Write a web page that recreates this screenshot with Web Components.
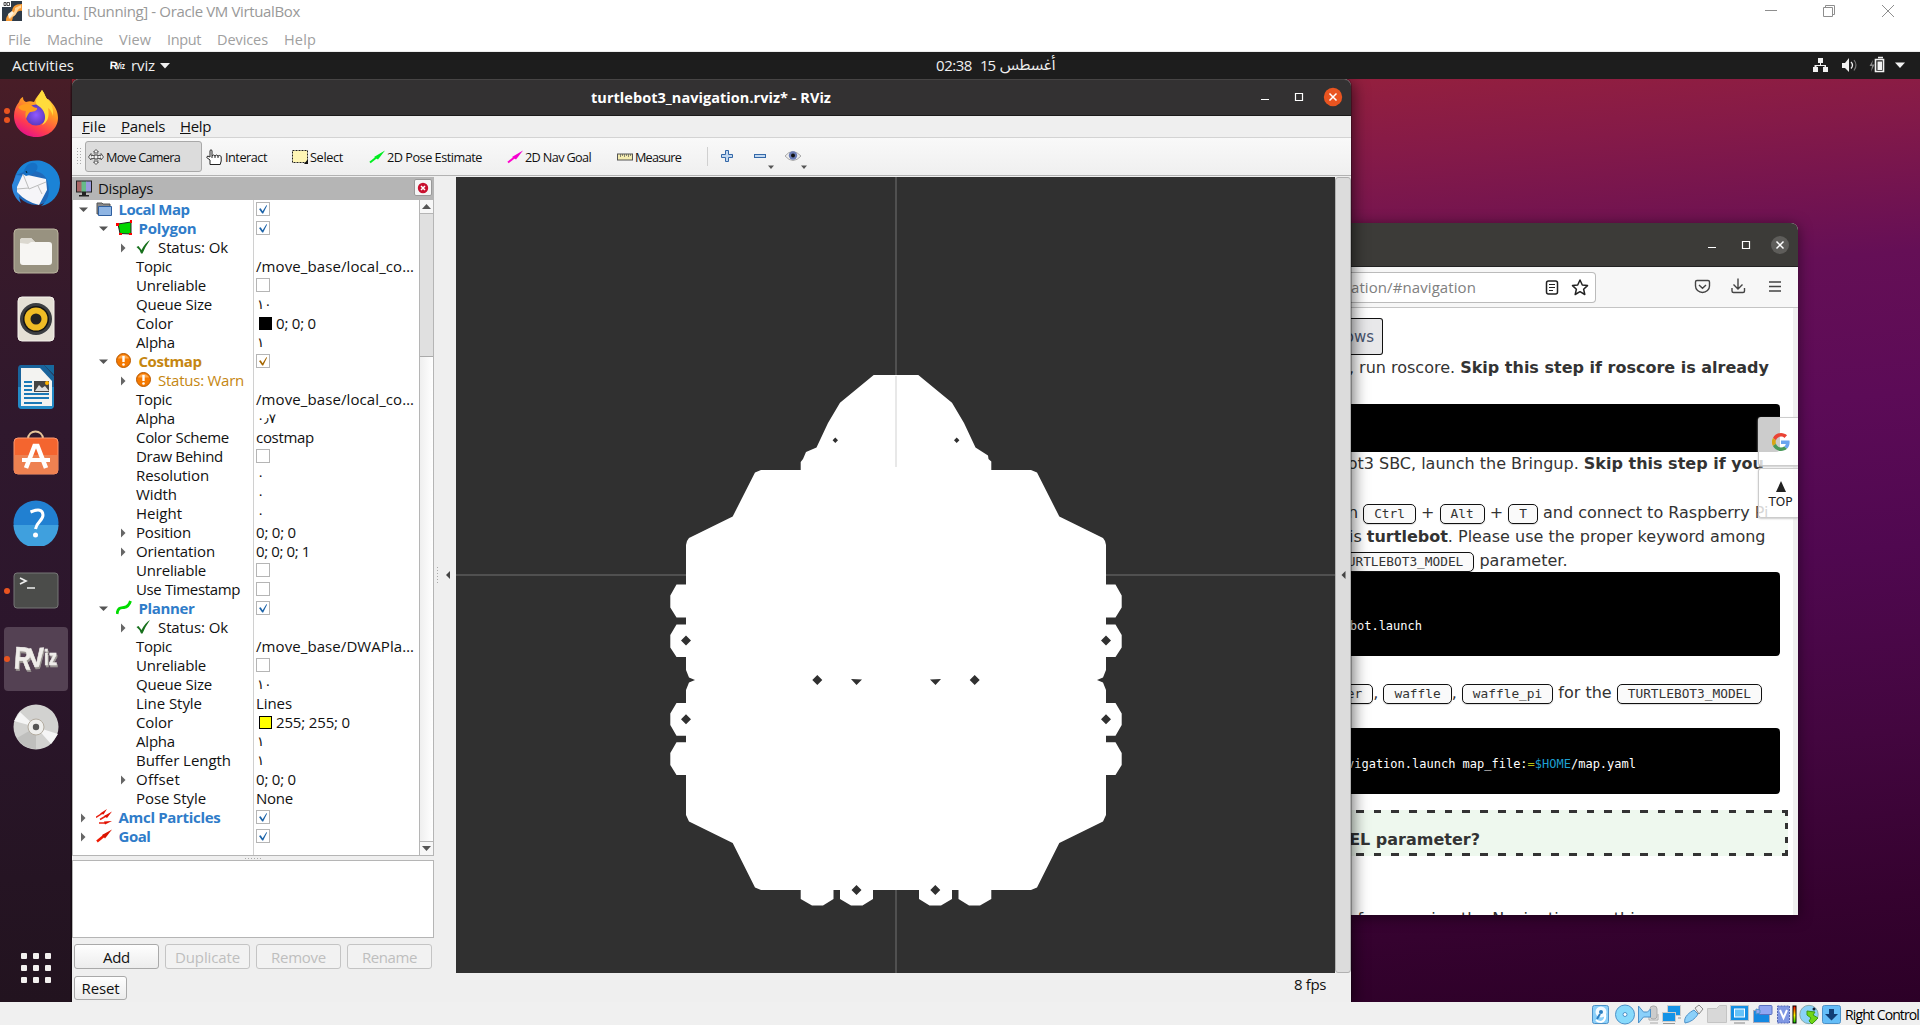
<!DOCTYPE html>
<html lang="en">
<head>
<meta charset="utf-8">
<title>ubuntu. [Running] - Oracle VM VirtualBox</title>
<style>
html,body{margin:0;padding:0;width:1920px;height:1025px;overflow:hidden;background:#fff}
</style>
</head>
<body>
<vm-host></vm-host>
<script>
const UI='"Open Sans","Noto Sans",sans-serif';
function el(name,html,init){
  customElements.define(name,class extends HTMLElement{
    constructor(){super();this.attachShadow({mode:'open'})}
    connectedCallback(){
      if(this.ready)return;this.ready=true;
      this.shadowRoot.innerHTML=typeof html==='function'?html(this):html;
      if(init)init(this);
    }
  });
}
/* Text that is tracked to fill a given width */
el('fit-text','<style>:host{display:inline-block;white-space:pre}</style><slot></slot>',h=>{
  const w=+h.getAttribute('w');
  h.style.letterSpacing='0px';
  const n=[...h.textContent].length;
  h.style.letterSpacing=((w-h.getBoundingClientRect().width)/n).toFixed(3)+'px';
  h.style.width=w+'px';
});

el('host-titlebar',`<style>
:host{display:flex;flex-direction:column;height:51px;background:#fff;border-bottom:1px solid #ececec;color:#999;font:15px ${UI};box-sizing:content-box}
.row{display:flex;height:25px;align-items:flex-start}
.row fit-text{margin:1px 0 0 5px;line-height:20px}
.menu{display:flex;height:26px;padding-left:8px;gap:16px;line-height:29px;color:#a0a0a0;font-size:14.5px}
svg{display:block}.ctl{margin-left:auto;padding-right:24px}
</style>
<div class="row"><svg width="20" height="20" style="margin:1px 0 0 2px"><rect width="20" height="20" fill="#2e3a47"/><path d="M4 20C4 12 9 14 10 10S12 3 20 3V10C14 9 15 14 11 16L10 20Z" fill="#f79a35"/><path d="M8 18C8 12 13 14 13 7L19 4V7C14 8 16 14 10 16Z" fill="#ffd59a"/><path d="M6 13L10 10L12 12L7 18Z" fill="#fff3dc"/><rect x="0" y="0" width="9" height="6" fill="#fff"/><path d="M2 1.500H4V4.500H2ZM5 1.500H7.500V4.500H5Z" fill="none" stroke="#222" stroke-width=".8"/></svg>
<fit-text w="273">ubuntu. [Running] - Oracle VM VirtualBox</fit-text>
<svg class="ctl" width="132" height="24" fill="none" stroke="#8e8e8e"><path d="M1 10.500H13M61.500 7.500V5.500H70.500V14.500H68.500M59.500 7.500H68.500V16.500H59.500ZM118 5L130 17M130 5L118 17"/></svg></div>
<div class="menu"><fit-text w="23">File</fit-text><fit-text w="56">Machine</fit-text><fit-text w="32">View</fit-text><fit-text w="34">Input</fit-text><fit-text w="51">Devices</fit-text><fit-text w="32">Help</fit-text></div>`);

el('gnome-bar',`<style>
:host{display:grid;grid-template-columns:936px 1fr auto;height:27px;background:#1d1d1d;color:#f0f0f0;font:15px/27px ${UI};align-items:center}
.l,.c{display:flex;align-items:center;height:27px}svg{display:block}
.ar{font-family:"Noto Sans Arabic","DejaVu Sans",sans-serif;font-size:15.500px}
.rv{margin-left:36px;width:21px}
</style>
<div class="l"><fit-text w="62" style="margin-left:12px">Activities</fit-text><svg class="rv" width="21" height="14" fill="#fff" font-family="Liberation Sans" font-weight="bold"><text x="0" y="10" font-size="11" textLength="8" lengthAdjust="spacingAndGlyphs" transform="rotate(3)">R</text><text x="6" y="10" font-size="9.500" textLength="9" lengthAdjust="spacingAndGlyphs">Viz</text></svg><fit-text w="24">rviz</fit-text><svg width="10" height="6" style="margin-left:5px"><path d="M0 0H10L5 5.500Z" fill="#f0f0f0"/></svg></div>
<div class="c"><fit-text w="36">02:38</fit-text><fit-text w="15" style="margin-left:8px">15</fit-text><span class="ar" dir="rtl" style="margin-left:5px">أغسطس</span></div>
<svg width="107" height="27" fill="#f2f2f2"><path d="M5 6h5v5h-2v2h5v2h2v5h-5v-5h1.500v-1H3.500v1H5v5H0v-5h1.500v-2H7v-2H5Z"/><path d="M29 11h3l4-5v14l-4-4h-3Z"/><path d="M38 10q3 3 0 6.500" fill="none" stroke="#eee" stroke-width="1.300"/><path d="M41 8q4 5 0 10.500" fill="none" stroke="#777" stroke-width="1.200"/><path d="M60 8l-3.500 6h2.500l-1 6l3.500-7.500h-2.500Z" fill="#888"/><path d="M65 5.500h5M62.500 7.500h8v12h-8Z" fill="none" stroke="#f2f2f2" stroke-width="1.600"/><rect x="64.500" y="9.500" width="4.500" height="8.500"/><path d="M82 10.500h10l-5 5.500Z"/></svg>`);

el('dock-item',h=>`<style>:host{display:flex;width:72px;height:64px;align-items:center;justify-content:center;position:relative;flex:none}
.tile{display:flex;align-items:center;justify-content:center;width:64px;height:64px;border-radius:4px;${h.hasAttribute('active')?'background:#544153':''}}
.dots{position:absolute;left:4px;top:0;height:64px;display:flex;flex-direction:column;justify-content:center;gap:3px}
i{display:block;width:6px;height:6px;border-radius:3px;background:#e95420}</style>
<span class="tile"><slot></slot></span><span class="dots">${'<i></i>'.repeat(+h.getAttribute('dots')||0)}</span>`);

el('ubuntu-dock',`<style>
:host{display:flex;flex-direction:column;width:72px;height:923px;background:linear-gradient(#481d27 0,#381a2a 150px,#2f182d 350px,#2c162c 550px,#251423 800px,#22131f)}
svg{display:block}.apps{margin:auto 0 19px 21px;display:grid;grid-template-columns:repeat(3,6px);gap:6px}.apps i{width:6px;height:6px;background:#f3f0ef;border-radius:1px}
.list{display:flex;flex-direction:column;gap:4px;padding-top:4px}
</style><div class="list">
<dock-item dots="2"><svg width="46" height="48" viewBox="0 0 46 48" style="margin-top:-2px"><defs><linearGradient id="a" x1=".8" y1="0" x2=".3" y2="1"><stop stop-color="#fff04a"/><stop offset=".4" stop-color="#ff9a24"/><stop offset=".75" stop-color="#ff3d4e"/><stop offset="1" stop-color="#e3108c"/></linearGradient><radialGradient id="b"><stop stop-color="#9059ff"/><stop offset="1" stop-color="#5b3ac0"/></radialGradient></defs><path d="M6 12C7 9 8 8 10 7c0 3 1 4 3 5 3-1 5-1 8 0 2-5 5-7 8-12 3 4 3 6 5 9 2 0 3 2 4 3 5 5 7 11 7 16C45 39 35 47 23 47S1 38 1 26C1 20 3 16 6 12Z" fill="url(#a)"/><circle cx="23" cy="25" r="10.500" fill="url(#b)"/><path d="M5 17c4-3 9-4 13-2 2 2 4 3 6 3 1 3-5 4-7 4-2 2-3 4-4 7-1-4-1-5 0-8-3 0-6-1-8-4Z" fill="#ff9d1e"/><path d="M29 0c3 4 3 7 6 10 6 6 5 13 5 16-1-4-3-7-5-8 2 9-1 15-6 17 7-8 1-17-5-20-3-4 1-8 5-15Z" fill="#ffdc3c"/></svg></dock-item>
<dock-item><svg width="48" height="48" viewBox="0 0 48 48"><circle cx="24" cy="24" r="22" fill="#2069b9"/><path d="M4 16C8 4 18 0 30 2c11 3 18 12 18 22 0 12-8 21-19 23 8-6 9-14 7-22-1-10-11-15-22-13Z" fill="#1b83d6"/><path d="M4 16L0 26c0 8 4 14 9 18-3-6-3-18 4-27Z" fill="#2e86db"/><path d="M5 28L11 15L34 20L35 31L27 46Q14 43 5 33Z" fill="#f6f5f8"/><path d="M11 15l6 15 17-7M5 30l12-1M26 27l4 8" fill="none" stroke="#bbb"/><path d="M11 15C13 4 22 1 25 6c2 4-2 9-11 11Z" fill="#1670c5"/><path d="M14 12l1 2" stroke="#022"/></svg></dock-item>
<dock-item><svg width="46" height="46" viewBox="0 0 46 46"><rect x="1" y="1" width="44" height="44" rx="4" fill="#989280" stroke="#bbb59f"/><path d="M7 13q0-3 3-3h8l4 4h14q3 0 3 3v17q0 3-3 3H10q-3 0-3-3Z" fill="#f7f6f3"/><path d="M7 15v-2q0-3 3-3h8l4 4h-4l-3 2Z" fill="#dbd8cf"/></svg></dock-item>
<dock-item><svg width="38" height="46"><rect x="1" y="1" width="36" height="44" rx="4" fill="#e5e0d5" stroke="#f5f2ec"/><circle cx="19" cy="23" r="16" fill="#3b3d40"/><circle cx="19" cy="23" r="13" fill="#151515"/><circle cx="19" cy="23" r="11.500" fill="#efbc25"/><circle cx="19" cy="23" r="5.500" fill="#222"/></svg></dock-item>
<dock-item><svg width="38" height="46"><path d="M4 1h23l10 11v29q0 4-4 4H5q-4 0-4-4V5q0-4 3-4Z" fill="#19639b"/><path d="M1 23h36v18q0 4-4 4H5q-4 0-4-4Z" fill="#238ac6"/><path d="M27 1h10v10Z" fill="#17699e"/><path d="M4 4h19l12 13v25H4Z" fill="#f3f3f1"/><path d="M7 18h8M7 22h8M7 26h8M7 30h25M7 34h25M7 39h18" stroke="#1b79b7" stroke-width="2"/><rect x="17" y="17" width="15" height="11" fill="#444"/><path d="M18 27l4-6 3 3 3-2 4 5Z" fill="#ddd"/><circle cx="30" cy="19" r="2" fill="#ffb300"/></svg></dock-item>
<dock-item><svg width="46" height="46" style="margin-bottom:5px"><path d="M15 9c0-10 15-10 15 0" fill="none" stroke="#e7c59a" stroke-width="2"/><rect x="1" y="8" width="44" height="36" rx="4" fill="#f4652f" stroke="#ff9970"/><path d="M1 25h44v15q0 4-4 4H5q-4 0-4-4Z" fill="#ee8151"/><path d="M13 38L21.500 16h3l8.500 22" fill="none" stroke="#fff" stroke-width="4.500"/><path d="M9 30h28" stroke="#fff" stroke-width="4"/></svg></dock-item>
<dock-item><svg width="46" height="46" style="margin-top:-1px"><circle cx="23" cy="23" r="22.500" fill="#2180d1"/><path d="M.5 25a22.500 22.500 0 0 0 45 0Z" fill="#3fa0de"/><path d="M17.500 12q12-5 12.500 3c0 6-6.500 6.500-7.500 14" fill="none" stroke="#fff" stroke-width="3"/><circle cx="22.500" cy="35" r="2.500" fill="#fff"/></svg></dock-item>
<dock-item dots="1"><svg width="46" height="38"><rect x="1" y="1" width="44" height="35" rx="3" fill="#4b4c4a" stroke="#777"/><path d="M7 6l6 3-6 3M14 16h8" fill="none" stroke="#eee" stroke-width="1.700"/></svg></dock-item>
<dock-item dots="1" active><svg width="46" height="34" style="filter:drop-shadow(1px 2px #9a9592)" fill="#efedea" stroke="#efedea" stroke-width=".6" font-family="Liberation Sans" font-weight="bold"><text x="1" y="27" font-size="31" textLength="17" lengthAdjust="spacingAndGlyphs" transform="rotate(4 10 20)">R</text><text x="15" y="25" font-size="27" textLength="17" lengthAdjust="spacingAndGlyphs" transform="rotate(-4 22 20)">V</text><text x="31" y="23" font-size="22" textLength="13" lengthAdjust="spacingAndGlyphs">iz</text></svg></dock-item>
<dock-item><svg width="46" height="46"><circle cx="23" cy="23" r="22.500" fill="#d2d2d0"/><path d="M23 23L1 17L7 8Z" fill="#f5f5f5"/><path d="M23 23L45 30L38 40Z" fill="#f5f5f5"/><path d="M23 23L23 45A22 22 0 0 1 4 34Z" fill="#bfbfbd"/><circle cx="23" cy="23" r="8" fill="#efefed" stroke="#b3aca0"/><circle cx="23" cy="23" r="3.200" fill="#555"/></svg></dock-item>
</div><div class="apps">${'<i></i>'.repeat(9)}</div>`);

/* Browser window that lies behind RViz */
el('key-box','<style>:host{display:inline-block;box-sizing:border-box;height:20px;padding:0 10px;border:1px solid #111;border-radius:5px;background:#fafafa;font:12.800px/18px "DejaVu Sans Mono",monospace;color:#333;box-shadow:0 1px 1px #ddd}</style><slot></slot>');
el('doc-line',h=>`<style>:host{display:flex;justify-content:flex-end;height:24px;line-height:26px;white-space:pre;width:${h.getAttribute('r')-1351}px}</style><span><slot></slot></span>`);
el('code-block',h=>`<style>:host{display:flex;box-sizing:border-box;background:#000;color:#fff;width:429px;height:${h.getAttribute('h')}px;border-radius:0 4px 4px 0;padding-top:${h.getAttribute('p')||0}px;font:12px/18px "DejaVu Sans Mono",monospace;white-space:pre}div{width:${(h.getAttribute('r')||1400)-1351}px;display:flex;justify-content:flex-end;flex:none}</style><div><span><slot></slot></span></div>`);
el('browser-window',`<style>
:host{display:flex;flex-direction:column;position:relative;height:692px;width:447px;background:#fff;border-radius:0 7px 0 0;overflow:hidden;color:#333;font:16px "DejaVu Sans",sans-serif}
.title{height:43px;background:#3c3b38;border-bottom:1px solid #222;display:flex;justify-content:flex-end;flex:none}
.tool{height:40px;background:#f7f7f7;border-bottom:1px solid #c4c4c4;display:flex;align-items:center;flex:none}
.url{display:flex;align-items:center;height:29px;width:244px;border:1px solid #bbb;border-left:0;border-radius:0 4px 4px 0;background:#fff;color:#808080;font:15px ${UI};margin-top:1px}
.url fit-text{margin-top:-1px}
.url svg{margin-left:auto}svg{display:block}
.page{display:flex;flex-direction:column;flex:1;overflow:hidden;padding-top:10px;border-right:5px solid #f0f0f0}
.page>*{flex:none}
.win{display:flex;box-sizing:border-box;width:32px;height:37px;border:1px solid #111;border-left:0;border-radius:0 3px 3px 0;background:#e8e8ea;color:#46536d;justify-content:flex-end;padding-right:8px;line-height:36px;overflow:hidden;font-size:15px}
.note{box-sizing:border-box;width:437px;height:46px;margin-top:16px;padding-top:17px;
background:repeating-linear-gradient(90deg,#333 0 7.700px,transparent 7.700px 17.740px) 4.700px 0/432.300px 3px no-repeat,repeating-linear-gradient(90deg,#333 0 7.700px,transparent 7.700px 17.740px) 4.700px 100%/432.300px 3px no-repeat,repeating-linear-gradient(#333 0 6px,transparent 6px 13.330px) 100% 0/3px 100% no-repeat,#eef8ee}
.side{position:absolute;right:0;top:194px;display:flex;flex-direction:column;gap:2px}
.side div{box-sizing:border-box;width:40px;height:49px;background:rgba(255,255,255,.8);border:1px solid #ccc;border-right:0;border-radius:3px 0 0 3px;display:flex;flex-direction:column;align-items:center;justify-content:center;font-size:12px;line-height:16px;box-shadow:0 1px 2px #ccc;padding-left:4px;color:#222}
.side div+div{padding-top:5px;height:50px}.side span{margin-top:2px}
</style>
<div class="title"><svg width="91" height="43" fill="none" stroke="#fff"><path d="M1 24.500H9M35.500 18.500h7v7h-7Z" stroke-width="1.200"/><circle cx="73" cy="22" r="9" fill="#5e5d5a" stroke="none"/><path d="M69.500 18.500l7 7m0-7l-7 7" stroke-width="1.500"/></svg></div>
<div class="tool"><div class="url"><fit-text w="125">ation/#navigation</fit-text><svg width="50" height="24" fill="none" stroke="#222" stroke-width="1.500"><rect x="1.500" y="5" width="11" height="13" rx="2"/><path d="M4 8.500h6M4 11.500h6M4 14.500h4" stroke-width="1.200"/><path d="M35 4l2.300 5 5.200.6-3.900 3.600 1.200 5.300-4.800-2.800-4.800 2.800 1.200-5.300L27.500 9.600l5.200-.6Z" stroke-linejoin="round"/></svg></div>
<svg width="90" height="24" style="margin-left:97.500px" fill="none" stroke="#444" stroke-width="1.400"><path d="M3 5.500h11q1.500 0 1.500 1.500v4a7 6.500 0 0 1-14 0V7q0-1.500 1.500-1.500ZM5 10l3.500 3.300L12 10M44 3.500v10M39.500 9.500l4.500 4.500 4.500-4.500M38 13v3q0 1.500 1.500 1.500h9.500q1.500 0 1.500-1.500v-3M75 7h12M75 11.500h12M75 16h12"/></svg></div>
<div class="page"><div class="win">ows</div>
<doc-line r="1769">, run roscore. <b>Skip this step if roscore is already</b></doc-line>
<code-block h="48" style="margin-top:25px"></code-block>
<doc-line r="1764" style="margin-top:-1px">ot3 SBC, launch the Bringup. <b>Skip this step if you</b></doc-line>
<doc-line r="1768.5" style="margin-top:25px">n <key-box>Ctrl</key-box> + <key-box>Alt</key-box> + <key-box>T</key-box> and connect to Raspberry Pi</doc-line>
<doc-line r="1765.5">is <b>turtlebot</b>. Please use the proper keyword among</doc-line>
<doc-line r="1567.5"><key-box>TURTLEBOT3_MODEL</key-box> parameter.</doc-line>
<code-block h="84" p="45" r="1422">turtlebot3_robot.launch</code-block>
<doc-line r="1762" style="margin-top:24px"><key-box>burger</key-box>, <key-box>waffle</key-box>, <key-box>waffle_pi</key-box> for the <key-box>TURTLEBOT3_MODEL</key-box></doc-line>
<code-block h="66" p="27" r="1636" style="margin-top:24px">turtlebot3_navigation.launch map_file:<span style="color:#b5bd12">=</span><span style="color:#1e9fd0">$HOME</span>/map.yaml</code-block>
<div class="note"><doc-line r="1480"><b>TURTLEBOT3_MODEL parameter?</b></doc-line></div>
<doc-line r="1643" style="margin-top:50px">before running the Navigation on  this</doc-line>
</div>
<div class="side"><div><svg width="18" height="18" viewBox="0 0 48 48"><path fill="#EA4335" d="M24 9.500c3.500 0 6.700 1.200 9.200 3.600l6.900-6.900C35.900 2.400 30.500 0 24 0 14.600 0 6.500 5.400 2.600 13.200l8 6.200C12.400 13.700 17.700 9.500 24 9.500z"/><path fill="#6aa5f0" d="M47 24.600c0-1.600-.2-3.100-.4-4.600H24v9h12.900c-.6 3-2.200 5.500-4.700 7.200l7.700 6C44.400 38 47 32 47 24.600z"/><path fill="#d9a514" d="M10.500 28.600a14.500 14.500 0 0 1 0-9.200l-8-6.200a24 24 0 0 0 0 21.600z"/><path fill="#4a9a5a" d="M24 48c6.500 0 11.900-2.100 15.900-5.800l-7.700-6c-2.200 1.500-4.900 2.300-8.200 2.300-6.300 0-11.600-4.200-13.500-9.900l-8 6.200C6.500 42.600 14.600 48 24 48z"/></svg></div><div><svg width="10" height="11"><path d="M5 0l5 11H0Z" fill="#222"/></svg><span>TOP</span></div></div>`);

/* RViz */
const ICON={
 folder:'<path d="M1 2h5l1 1h7v10H1Z" fill="#888" stroke="#555"/><path d="M2.500 5.500h13v9h-13Z" fill="#8fb5e3" stroke="#2f5f9f"/>',
 polygon:'<path d="M2 4L15 2V14L4 13.500Z" fill="#00d600" stroke="#222"/><path d="M0 3h3v3H0ZM14 0h2v3h-2ZM3 13h3v2H3ZM13 13h3v2h-3Z" fill="#f00"/>',
 ok:'<path d="M.5 8l2-1 3 4Q9 4 14 1Q9 8 6.500 14.500H5Q3.500 10 .5 8Z" fill="#17701c"/>',
 warn:'<circle cx="7.500" cy="7.500" r="7" fill="#f57900" stroke="#b85a00"/><path d="M2 5.500a6 6 0 0 1 11 0Z" fill="#ffa94d"/><path d="M7.500 3v6" stroke="#fff" stroke-width="2.400"/><circle cx="7.500" cy="11.500" r="1.300" fill="#fff"/>',
 path:'<path d="M1 14C2 7 5 8 8 7.500S13 6 14.500 1" fill="none" stroke="#00dc00" stroke-width="2.800"/>',
 amcl:'<path d="M0 8.500L6 4.500M4 10.500L10 7M3 14h6" stroke="#e82010" stroke-width="1.500"/><path d="M4 4.500L11 0L7.500 5.500ZM8 7L16 2.500L11 9ZM8 12.500L16 12L9 15.500Z" fill="#e01000"/>',
 goal:'<path d="M1 13.500L9 7" stroke="#ef1800" stroke-width="2.500"/><path d="M6 7L16 1.500L9 10.500Z" fill="#d81400"/>'
};
el('tree-row',h=>{
 const g=n=>h.getAttribute(n),lv=+g('lv'),ic=g('icon'),arrow=g('arrow');
 const gap={0:4,1:24,2:44}[lv];
 const col=g('kind')==='warn'?'#c58610':g('kind')==='blue'?'#2f7cc9':'#111';
 const bold=lv<2;
 const v=g('val'),c=g('check');
 let right='';
 if(c!==null)right=`<svg width="14" height="14" style="margin-top:-1px"><rect x=".5" y=".5" width="13" height="13" fill="#fff" stroke="#b5b5b5"/>${c==='0'?'':`<path d="M3 7l1.700-.8 1.900 3L10.500 3 11 3.800 7.200 11.500H6.200Z" fill="${c==='w'?'#a56600':'#1c63a8'}"/>`}</svg>`;
 else if(g('color'))right=`<svg width="13" height="13" style="margin:0 4px 0 3px"><rect x=".5" y=".5" width="12" height="12" fill="${g('color')}" stroke="#000"/></svg><fit-text w="${g('vw')}">${v}</fit-text>`;
 else if(g('ar')!==null)right=`<span class="ar">${v}</span>`;
 else if(v)right=`<fit-text w="${g('vw')}">${v}</fit-text>`;
 return `<style>:host{display:flex;height:19px;flex:none;align-items:center;font:15px/19px ${UI};color:#111}
 .a{display:flex;align-items:center;width:181px;height:19px;box-sizing:border-box;padding-left:${gap}px;border-right:1px solid #d0d0d0;color:${col};font-weight:${bold?'bold':'normal'}}
 .ar{font-family:"DejaVu Sans",sans-serif;font-size:13.500px;padding-left:1px;letter-spacing:1px}
 svg{display:block;flex:none}.w{width:19px}.i{width:${lv==2?22:22.500}px;margin-top:-1px}.b{display:flex;align-items:center;padding-left:2px;height:19px}</style>
 <div class="a"><svg class="w" width="19" height="12">${arrow==='d'?'<path d="M2 3.500h9l-4.500 4.500Z" fill="#555"/>':arrow==='r'?'<path d="M4 1.500l4.500 4.500L4 10.500Z" fill="#666"/>':''}</svg>${ic?`<svg class="i" width="20" height="16">${ICON[ic]}</svg>`:''}<fit-text w="${g('w')}">${h.textContent}</fit-text></div><div class="b">${right}</div>`});

const R=(lv,name,w,o='')=>`<tree-row lv="${lv}" w="${w}" ${o}>${name}</tree-row>`;
const rows=[
R(0,'Local Map',71,'icon="folder" arrow="d" kind="blue" check="1"'),
R(1,'Polygon',58,'icon="polygon" arrow="d" kind="blue" check="1"'),
R(2,'Status: Ok',70,'icon="ok" arrow="r"'),
R(2,'Topic',36,'val="/move_base/local_co…" vw="158"'),
R(2,'Unreliable',70,'check="0"'),
R(2,'Queue Size',76,'ar val="١٠"'),
R(2,'Color',37,'color="#000" val="0; 0; 0" vw="40"'),
R(2,'Alpha',39,'ar val="١"'),
R(1,'Costmap',63,'icon="warn" arrow="d" kind="warn" check="w"'),
R(2,'Status: Warn',86,'icon="warn" arrow="r" kind="warn"'),
R(2,'Topic',36,'val="/move_base/local_co…" vw="158"'),
R(2,'Alpha',39,'ar val="٠٫٧"'),
R(2,'Color Scheme',93,'val="costmap" vw="58"'),
R(2,'Draw Behind',87,'check="0"'),
R(2,'Resolution',73,'ar val="٠"'),
R(2,'Width',41,'ar val="٠"'),
R(2,'Height',46,'ar val="٠"'),
R(2,'Position',55,'arrow="r" val="0; 0; 0" vw="40"'),
R(2,'Orientation',79,'arrow="r" val="0; 0; 0; 1" vw="54"'),
R(2,'Unreliable',70,'check="0"'),
R(2,'Use Timestamp',104,'check="0"'),
R(1,'Planner',56,'icon="path" arrow="d" kind="blue" check="1"'),
R(2,'Status: Ok',70,'icon="ok" arrow="r"'),
R(2,'Topic',36,'val="/move_base/DWAPla…" vw="158"'),
R(2,'Unreliable',70,'check="0"'),
R(2,'Queue Size',76,'ar val="١٠"'),
R(2,'Line Style',66,'val="Lines" vw="36"'),
R(2,'Color',37,'color="#ff0" val="255; 255; 0" vw="74"'),
R(2,'Alpha',39,'ar val="١"'),
R(2,'Buffer Length',95,'ar val="١"'),
R(2,'Offset',44,'arrow="r" val="0; 0; 0" vw="40"'),
R(2,'Pose Style',70,'val="None" vw="37"'),
R(0,'Amcl Particles',102,'icon="amcl" arrow="r" kind="blue" check="1"'),
R(0,'Goal',32,'icon="goal" arrow="r" kind="blue" check="1"')].join('');

el('push-button',h=>`<style>:host{display:flex;box-sizing:border-box;width:${h.getAttribute('bw')}px;height:${h.getAttribute('bh')||25}px;border:1px solid #a9a9a9;border-radius:3px;align-items:center;justify-content:center;background:linear-gradient(#fefefe,#ececec);font:15px/22px ${UI};color:#111}:host([off]){color:#bebebe;border-color:#c4c4c4;background:#f2f2f2}</style><slot></slot>`);

el('displays-panel',`<style>
:host{display:flex;flex-direction:column;width:362px;height:825px;color:#111;font:15px ${UI};flex:none}
svg{display:block}
.head{height:23px;background:#b5b5b5;display:flex;align-items:center;padding:0 2px 0 4px;flex:none}
.head fit-text{margin:-2px 0 0 6px}
.x{margin:-2px 0 0 auto;width:18px;height:17px;box-sizing:border-box;border:1px solid #999;border-radius:2px;background:#f5f5f5;display:flex;align-items:center;justify-content:center}
.tree{display:flex;height:656px;box-sizing:border-box;border:1px solid #b5b5b5;border-top:0;background:#fff;flex:none}
.rows{display:flex;flex-direction:column;width:346px;background:linear-gradient(#d0d0d0,#d0d0d0) 180px 0/1px 100% no-repeat}
.sb{display:flex;flex-direction:column;width:13px;border-left:1px solid #b5b5b5;background:linear-gradient(90deg,#efefef,#fff)}
.bt{height:13px;display:flex;justify-content:center;align-items:center;background:#f7f7f7}
.up{border-bottom:1px solid #b5b5b5}.dn{border-top:1px solid #b5b5b5;margin-top:auto}
.th{height:142px;background:#e0e0e0;border-bottom:1px solid #aaa}
.dots{height:4px;display:flex;justify-content:center;gap:2px;align-items:center}.dots i{width:1px;height:1px;background:#aaa}
.box{height:78px;box-sizing:border-box;border:1px solid #b5b5b5;background:#fff;flex:none}
.btns{display:flex;gap:6px;padding:6px 2px 7px;flex:none}
</style>
<div class="head"><svg width="16" height="17"><rect width="16" height="12" y=".5" fill="#222"/><path d="M1 1.500h5v10H1Z" fill="#a66"/><path d="M5.500 1.500h5v10h-5Z" fill="#6b8"/><path d="M10 1.500h5v10h-5Z" fill="#99d"/><path d="M6 12h4v3h3v1.500H3V15h3Z" fill="#222"/></svg><fit-text w="55">Displays</fit-text><span class="x"><svg width="12" height="12"><circle cx="6" cy="6" r="5.200" fill="#c8102e"/><path d="M4 4l4 4m0-4l-4 4" stroke="#fff" stroke-width="1.500"/></svg></span></div>
<div class="tree"><div class="rows">${rows}</div><div class="sb"><div class="bt up"><svg width="9" height="5"><path d="M0 5h9L4.500 0Z" fill="#555"/></svg></div><div class="th"></div><div class="bt dn"><svg width="9" height="5"><path d="M0 0h9L4.500 5Z" fill="#555"/></svg></div></div></div>
<div class="dots">${'<i></i>'.repeat(6)}</div>
<div class="box"></div>
<div class="btns"><push-button bw="85"><fit-text w="27">Add</fit-text></push-button><push-button bw="85" off><fit-text w="65">Duplicate</fit-text></push-button><push-button bw="85" off><fit-text w="55">Remove</fit-text></push-button><push-button bw="85" off><fit-text w="55">Rename</fit-text></push-button></div>
<push-button bw="53" bh="24" style="margin-left:2px"><fit-text w="38">Reset</fit-text></push-button>`);

/* Costmap: one half is given, the other is its mirror */
const half='M896 375H918.300L952 402.700L964 423L975.500 447.500L988 455.500L988.500 459L991.300 461.500V470H1031L1037 472.500L1059.300 516.500L1103 538L1105 541L1106 545V584.500H1115.500L1121.700 595.500V607.500L1115.500 617.500H1106V624.500H1115.500L1121.700 635V647.500L1115.500 657H1106V670L1103 677.500L1097 680L1103 682.500L1106 690V703H1115.500L1121.700 713.500V725L1115.500 735.700H1106V742.300H1115.500L1121.700 753V765L1115.500 775H1106V815L1103 821.500L1059.300 843L1037 887.500L1031 890H991.300V899L980 905.500H969L958.500 899V890H952V899L941 905.500H929.500L919 899V890H896Z';
const halfL=half.replace('L988 455.500L988.500 459L991.300 461.500','L986 452L989 459L991.300 462');
const dia=(x,y,r=5)=>`M${x} ${y-r}L${x+r} ${y}L${x} ${y+r}L${x-r} ${y}Z`;
el('map-view',`<style>:host{display:block;width:879px;height:796px;background:#303030;flex:none}svg{display:block}</style>
<svg width="879" height="796" viewBox="456 177 879 796"><path d="M895 177h2v796h-2ZM456 574h879v2H456Z" fill="#505050"/>
<path d="${half}" fill="#fff"/><path d="${halfL}" fill="#fff" transform="matrix(-1 0 0 1 1792 0)"/><path d="M895 375h2v515h-2Z" fill="#fff"/><path d="M895 376h2v91h-2Z" fill="#e8e8e8"/>
<path fill="#303030" d="${[[686,640.5],[1106,640.5],[686,719.3],[1106,719.3],[817.3,680],[974.7,680],[856.5,890],[935.3,890]].map(p=>dia(...p)).join('')}${dia(835.3,440.3,2.7)}${dia(956.7,440.3,2.7)}M851 679l11 .5L856.500 685ZM930 679.500l11-.5L935.500 685Z"/></svg>`);

el('tool-button',h=>`<style>:host{display:flex;align-items:center;box-sizing:border-box;height:31px;width:${h.getAttribute('bw')}px;padding-left:3px;gap:2px;font:12.700px ${UI};color:#111;border:1px solid transparent;border-radius:3px;flex:none}:host([on]){background:#dcdcdc;border-color:#a9a9a9;padding-left:2px}::slotted(fit-text){margin-top:1px}</style><slot></slot>`);

el('rviz-window',`<style>
:host{display:flex;flex-direction:column;width:1279px;height:923px;background:#efefef;border-radius:7px 7px 0 0;color:#111;font:15px ${UI};box-shadow:0 0 0 1px rgba(0,0,0,.25),2px 3px 16px rgba(0,0,0,.6);clip-path:inset(0 -30px -30px -2px)}
svg{display:block;flex:none}
.title{height:37px;box-sizing:border-box;border-top:1px solid #474545;background:#333132;border-radius:7px 7px 0 0;border-bottom:1px solid #1b1a1a;display:grid;grid-template-columns:519px 1fr 92px;color:#fff;font-weight:bold;font-size:14.500px;line-height:35px;flex:none}
.menu{height:21px;display:flex;padding-left:10px;gap:15px;line-height:21px;border-bottom:1px solid #d3d3d3;flex:none}
.tools{height:37px;display:flex;align-items:center;background:linear-gradient(#f9f9f9,#efefef);border-bottom:1px solid #b2b2b2;flex:none;padding-left:5px}
.main{display:flex;margin-top:1px;height:826px}
.right{display:flex;flex-direction:column}.view{display:flex}
.split{width:22px;height:796px;display:flex;align-items:center}
.edge{width:16px;box-sizing:border-box;border:1px solid #b0b0b0;background:#dcdcdc;display:flex;align-items:center;justify-content:center;border-radius:3px}
.fps{align-self:flex-end;margin:1px 25px 0 0}
</style>
<div class="title"><span></span><div><fit-text w="240">turtlebot3_navigation.rviz* - RViz</fit-text></div><svg width="92" height="34" fill="none" stroke="#fff"><path d="M2 19.500h8M36.500 13.500h7v7h-7Z" stroke-width="1.200"/><circle cx="74" cy="17" r="9.200" fill="#e95420" stroke="none"/><path d="M70.500 13.500l7 7m0-7l-7 7" stroke-width="1.500"/></svg></div>
<div class="menu"><fit-text w="24"><u>F</u>ile</fit-text><fit-text w="44"><u>P</u>anels</fit-text><fit-text w="31"><u>H</u>elp</fit-text></div>
<div class="tools"><svg width="8" height="18"><path d="M.5 0v18M3.500 0v18" stroke="#aaa" stroke-dasharray="1 2"/></svg>
<tool-button bw="117" on><svg width="16" height="16" fill="#f4f4f4" stroke="#444" stroke-width=".9"><path d="M8 .5l2.500 2.500H9v3.500h4V4.500L15.500 8 13 11V9.500H9V13h1.500L8 15.500 5.500 13H7V9.500H3V11L.5 8 3 4.500v2h4V3H5.500Z"/><circle cx="8" cy="8" r="4.500" fill="none" stroke="#888" stroke-dasharray="1 1"/><circle cx="8" cy="8" r="2" stroke-width=".8"/></svg><fit-text w="74">Move Camera</fit-text></tool-button>
<tool-button bw="86"><svg width="17" height="16" fill="#fff" stroke="#222"><path d="M4 15.500V11L.7 8.500l1-1.500L4 8V1.500q1-1.500 2 0V7l1.500-1 1.500 1 1.500-1 1.500 1 1.700-.5 1.500 1V12l-1 3.500ZM6 7v2M9 7v2M12 7v2"/></svg><fit-text w="42">Interact</fit-text></tool-button>
<tool-button bw="77"><svg width="16" height="14"><rect x=".5" y=".5" width="15" height="12" fill="#fff6b5" stroke="#222" stroke-dasharray="2 1"/><path d="M16 9v5h-4Z" fill="#111"/></svg><fit-text w="33">Select</fit-text></tool-button>
<tool-button bw="138"><svg width="16" height="14"><path d="M1 12.500L8 7" stroke="#00f020" stroke-width="2"/><path d="M5 7L16 .5L9 9.500Z" fill="#00ec20"/></svg><fit-text w="95">2D Pose Estimate</fit-text></tool-button>
<tool-button bw="110"><svg width="16" height="14"><path d="M1 12.500L8 7" stroke="#f0c" stroke-width="2"/><path d="M5 7L16 .5L9 9.500Z" fill="#f400d0"/></svg><fit-text w="66">2D Nav Goal</fit-text></tool-button>
<tool-button bw="92"><svg width="16" height="8"><rect x=".5" y="1" width="15" height="6" fill="#f4ecb0" stroke="#555"/><path d="M3.500 1v3M5.500 1v2M7.500 1v3M9.500 1v2M11.500 1v3M13.500 1v2" stroke="#555" stroke-width=".7"/></svg><fit-text w="46">Measure</fit-text></tool-button>
<svg width="102" height="31"><path d="M2.500 6v19" stroke="#d0d0d0"/><path d="M20.500 9.500h3v4h4v3h-4v4h-3v-4h-4v-3h4Z" fill="#c2d8f0" stroke="#3468a8"/><rect x="49.500" y="13.500" width="11" height="3" fill="#c2d8f0" stroke="#3468a8"/><path d="M63 24.500h6l-3 3.500ZM96 24.500h6l-3 3.500Z" fill="#555"/><path d="M80 15q7.500-9 16 0q-8 9-16 0Z" fill="#eee" stroke="#aaa"/><circle cx="88" cy="14.500" r="4.200" fill="#6a7cb5"/><circle cx="88" cy="14.500" r="2" fill="#111"/></svg></div>
<div class="main"><displays-panel></displays-panel><div class="right"><div class="view"><div class="split"><svg width="22" height="20"><path d="M3.500 2v16" stroke="#aaa" stroke-dasharray="1 2"/><path d="M16 6v8l-4-4Z" fill="#444"/></svg></div><map-view></map-view><div class="edge"><svg width="5" height="8"><path d="M4.500 0v8L.5 4Z" fill="#444"/></svg></div></div><fit-text class="fps" w="32">8 fps</fit-text></div></div>`);

el('vm-status',`<style>:host{display:flex;height:23px;background:#f0f0f0;color:#000;font:14px/24px ${UI};justify-content:flex-end}svg{display:block}fit-text{line-height:26px}</style>
<svg width="253" height="23" viewBox="0 0 253 23" fill="#8bd0fa" stroke="#4c91c8">
<rect x=".5" y="3.500" width="16" height="18" rx="2"/><circle cx="9" cy="10" r="5.500" fill="#f2faff" stroke="none"/><path d="M13 12q1 7-4 8-3 0-5-2" fill="none" stroke="#fff" stroke-width="2"/><path d="M8 12l-3 5" stroke="#2b7fc2" stroke-width="2"/><circle cx="9" cy="10" r="2" fill="#2b7fc2" stroke="none"/>
<circle cx="33" cy="12.500" r="9.500" fill="#87dafc"/><circle cx="33" cy="12.500" r="2" fill="#fff"/>
<rect x="58" y="4" width="7" height="13" rx="3" fill="#ccc" stroke="#aaa"/><path d="M57 12v6h9v-6M58 21h8" fill="none" stroke="#aaa"/><path d="M46.500 4v17l5-6h7V7l-3 3h-4Z"/>
<rect x="75.500" y="3.500" width="13" height="10" fill="#1493e6" stroke="#ccc"/><rect x="70.500" y="10.500" width="13" height="9" fill="#1493e6" stroke="#ccc"/><path d="M71 21.500h12M86 16h3" stroke="#999"/>
<path d="M93 21c-2-6 5-11 9-13l4 4c-3 5-7 8-13 9Z"/><path d="M103 6l4-3 4 4-4 5Z" fill="#eee" stroke="#888"/>
<path d="M115.500 6.500h9l3-3h7v17h-19Z" fill="#d8d8d8" stroke="#c4c4c4"/>
<rect x="138.500" y="3.500" width="18" height="15" fill="#1590e4" stroke="#bfc5ca"/><rect x="142.500" y="7" width="10" height="8" fill="#65c2f8" stroke="#fff"/><path d="M142 21h11" stroke="#888"/>
<rect x="161.500" y="8.500" width="16" height="12" fill="#1388e2" stroke="#aab"/><rect x="167" y="3.500" width="13" height="9" rx="1" fill="#8fa5f2" stroke="#5a70c0"/><path d="M164 7l4 1v3l-4 1Z" fill="#8fa5f2"/>
<rect x="185.500" y="4" width="12" height="17" fill="#7f97e3" stroke="#5568b5" stroke-dasharray="2 1"/><path d="M188 8l3.500 8L195 8" fill="none" stroke="#fff" stroke-width="2"/>
<defs><linearGradient id="g" x1="0" y1="0" x2="0" y2="1"><stop stop-color="#f00"/><stop offset=".55" stop-color="#ff0"/><stop offset="1" stop-color="#0c0"/></linearGradient></defs><rect x="201" y="4" width="3" height="17" fill="url(#g)" stroke="#000"/>
<circle cx="217" cy="12.500" r="9.200" fill="#8ad2f8" stroke="#8aa"/><path d="M215 9l8 1-2 3 5 3-6 6-3-3 2-3-4-3Z" fill="#70d616" stroke="#3e9a12"/><circle cx="222" cy="7" r="1.500" fill="#123" stroke="none"/>
<rect x="230.500" y="3.500" width="18" height="18" rx="2" fill="#64bdf7"/><path d="M237 7h5v5h4l-6.500 6.500L233 12h4Z" fill="#113e75" stroke="none"/></svg>
<fit-text w="74" style="margin-right:1px">Right Control</fit-text>`);

el('guest-desktop',`<style>
:host{display:flex;flex-direction:column;height:950px;overflow:hidden;position:relative}
.desk{position:relative;height:923px;display:flex;background:linear-gradient(175deg,#a52536 0,#9e2338 6%,#851a48 18%,#650f56 31%,#5c0b57 44%,#500850 58%,#43063f 75%,#35022f 90%,#2c0027)}
browser-window{position:absolute;left:1351px;top:144px}
.sh{position:absolute;left:1351px;top:144px;width:447px;height:692px;border-radius:0 7px 0 0;box-shadow:0 2px 14px rgba(0,0,0,.5)}
rviz-window{position:absolute;left:72px;top:0}
</style><gnome-bar></gnome-bar><div class="desk"><ubuntu-dock></ubuntu-dock><div class="sh"></div><browser-window></browser-window><rviz-window></rviz-window></div>`);

el('vm-host',`<style>:host{display:flex;flex-direction:column;width:1920px;height:1025px;overflow:hidden}</style><host-titlebar></host-titlebar><guest-desktop></guest-desktop><vm-status></vm-status>`);
</script>
</body>
</html>
